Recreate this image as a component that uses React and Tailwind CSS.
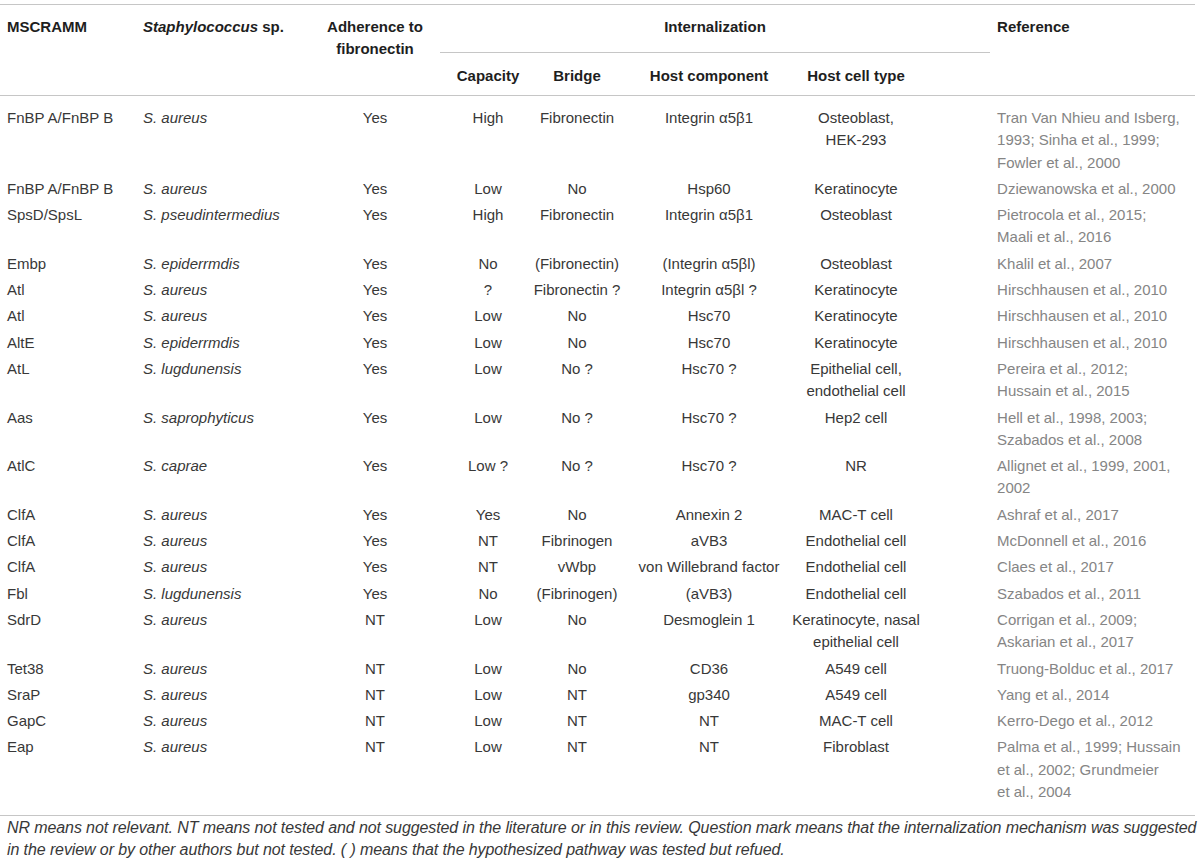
import React from 'react';

const rows = [
    { m: "FnBP A/FnBP B", sp: "S. aureus", adh: "Yes", cap: "High", bridge: "Fibronectin", host: "Integrin α5β1", cell: ["Osteoblast,", "HEK-293"], ref: ["Tran Van Nhieu and Isberg,", "1993; Sinha et al., 1999;", "Fowler et al., 2000"] },
    { m: "FnBP A/FnBP B", sp: "S. aureus", adh: "Yes", cap: "Low", bridge: "No", host: "Hsp60", cell: ["Keratinocyte"], ref: ["Dziewanowska et al., 2000"] },
    { m: "SpsD/SpsL", sp: "S. pseudintermedius", adh: "Yes", cap: "High", bridge: "Fibronectin", host: "Integrin α5β1", cell: ["Osteoblast"], ref: ["Pietrocola et al., 2015;", "Maali et al., 2016"] },
    { m: "Embp", sp: "S. epiderrmdis", adh: "Yes", cap: "No", bridge: "(Fibronectin)", host: "(Integrin α5βl)", cell: ["Osteoblast"], ref: ["Khalil et al., 2007"] },
    { m: "Atl", sp: "S. aureus", adh: "Yes", cap: "?", bridge: "Fibronectin ?", host: "Integrin α5βl ?", cell: ["Keratinocyte"], ref: ["Hirschhausen et al., 2010"] },
    { m: "Atl", sp: "S. aureus", adh: "Yes", cap: "Low", bridge: "No", host: "Hsc70", cell: ["Keratinocyte"], ref: ["Hirschhausen et al., 2010"] },
    { m: "AltE", sp: "S. epiderrmdis", adh: "Yes", cap: "Low", bridge: "No", host: "Hsc70", cell: ["Keratinocyte"], ref: ["Hirschhausen et al., 2010"] },
    { m: "AtL", sp: "S. lugdunensis", adh: "Yes", cap: "Low", bridge: "No ?", host: "Hsc70 ?", cell: ["Epithelial cell,", "endothelial cell"], ref: ["Pereira et al., 2012;", "Hussain et al., 2015"] },
    { m: "Aas", sp: "S. saprophyticus", adh: "Yes", cap: "Low", bridge: "No ?", host: "Hsc70 ?", cell: ["Hep2 cell"], ref: ["Hell et al., 1998, 2003;", "Szabados et al., 2008"] },
    { m: "AtlC", sp: "S. caprae", adh: "Yes", cap: "Low ?", bridge: "No ?", host: "Hsc70 ?", cell: ["NR"], ref: ["Allignet et al., 1999, 2001,", "2002"] },
    { m: "ClfA", sp: "S. aureus", adh: "Yes", cap: "Yes", bridge: "No", host: "Annexin 2", cell: ["MAC-T cell"], ref: ["Ashraf et al., 2017"] },
    { m: "ClfA", sp: "S. aureus", adh: "Yes", cap: "NT", bridge: "Fibrinogen", host: "aVB3", cell: ["Endothelial cell"], ref: ["McDonnell et al., 2016"] },
    { m: "ClfA", sp: "S. aureus", adh: "Yes", cap: "NT", bridge: "vWbp", host: "von Willebrand factor", cell: ["Endothelial cell"], ref: ["Claes et al., 2017"] },
    { m: "Fbl", sp: "S. lugdunensis", adh: "Yes", cap: "No", bridge: "(Fibrinogen)", host: "(aVB3)", cell: ["Endothelial cell"], ref: ["Szabados et al., 2011"] },
    { m: "SdrD", sp: "S. aureus", adh: "NT", cap: "Low", bridge: "No", host: "Desmoglein 1", cell: ["Keratinocyte, nasal", "epithelial cell"], ref: ["Corrigan et al., 2009;", "Askarian et al., 2017"] },
    { m: "Tet38", sp: "S. aureus", adh: "NT", cap: "Low", bridge: "No", host: "CD36", cell: ["A549 cell"], ref: ["Truong-Bolduc et al., 2017"] },
    { m: "SraP", sp: "S. aureus", adh: "NT", cap: "Low", bridge: "NT", host: "gp340", cell: ["A549 cell"], ref: ["Yang et al., 2014"] },
    { m: "GapC", sp: "S. aureus", adh: "NT", cap: "Low", bridge: "NT", host: "NT", cell: ["MAC-T cell"], ref: ["Kerro-Dego et al., 2012"] },
    { m: "Eap", sp: "S. aureus", adh: "NT", cap: "Low", bridge: "NT", host: "NT", cell: ["Fibroblast"], ref: ["Palma et al., 1999; Hussain", "et al., 2002; Grundmeier", "et al., 2004"] }
];

const Lines = ({ items }) => (
    <div className="flex flex-col items-center whitespace-nowrap">
        {items.map((t, i) => <span key={i}>{t}</span>)}
    </div>
);

const App = () => {
    return (
        <div className="w-[1200px] h-[868px] bg-white pt-[4px] font-['Liberation_Sans',Arial,sans-serif] text-[15px] leading-[22.3px] text-[#383838]">
            <table className="w-[1195px] table-fixed border-collapse">
                <colgroup>
                    <col className="w-[135px]" />
                    <col className="w-[175px]" />
                    <col className="w-[130px]" />
                    <col className="w-[96px]" />
                    <col className="w-[82px]" />
                    <col className="w-[182px]" />
                    <col className="w-[112px]" />
                    <col className="w-[78px]" />
                    <col className="w-[205px]" />
                </colgroup>
                <thead className="border-y border-[#c6c6c6] text-[#1e1e1e] font-bold leading-[22px]">
                    <tr>
                        <th rowSpan={2} className="pl-[7px] pt-[11px] text-left align-top font-bold">MSCRAMM</th>
                        <th rowSpan={2} className="pl-[8px] pt-[11px] text-left align-top font-bold">
                            <i>Staphylococcus</i> sp.
                        </th>
                        <th rowSpan={2} className="pt-[11px] text-center align-top font-bold">
                            Adherence to<br />fibronectin
                        </th>
                        <th colSpan={5} className="p-0 pt-[11px] align-top font-bold">
                            <div className="border-b border-[#c6c6c6] pb-[14px] text-center">Internalization</div>
                        </th>
                        <th rowSpan={2} className="pl-[7px] pt-[11px] text-left align-top font-bold">Reference</th>
                    </tr>
                    <tr>
                        <th className="pt-[12px] pb-[8px] text-center font-bold">Capacity</th>
                        <th className="pt-[12px] pb-[8px] text-center font-bold">Bridge</th>
                        <th className="pt-[12px] pb-[8px] text-center font-bold">Host component</th>
                        <th className="pt-[12px] pb-[8px] font-bold"><Lines items={["Host cell type"]} /></th>
                        <th></th>
                    </tr>
                </thead>
                <tbody className="border-b border-[#c6c6c6]">
                    {rows.map((r, i) => {
                        const pad = i === 0 ? "pt-[11px] pb-[2px]" : i === rows.length - 1 ? "pt-[2px] pb-[12px]" : "py-[2px]";
                        return (
                            <tr key={i} className="align-top">
                                <td className={`pl-[7px] ${pad}`}>{r.m}</td>
                                <td className={`pl-[8px] italic ${pad}`}>{r.sp}</td>
                                <td className={`text-center ${pad}`}>{r.adh}</td>
                                <td className={`text-center ${pad}`}>{r.cap}</td>
                                <td className={pad}><Lines items={[r.bridge]} /></td>
                                <td className={pad}><Lines items={[r.host]} /></td>
                                <td className={pad}><Lines items={r.cell} /></td>
                                <td className={pad}></td>
                                <td className={`pl-[7px] text-[#858585] whitespace-nowrap ${pad}`}>
                                    {r.ref.map((t, j) => <div key={j}>{t}</div>)}
                                </td>
                            </tr>
                        );
                    })}
                </tbody>
            </table>
            <p className="w-[1195px] pl-[7px] pt-[1px] italic text-[16px] leading-[22px] tracking-[-0.1px] text-[#383838] whitespace-nowrap">
                NR means not relevant. NT means not tested and not suggested in the literature or in this review. Question mark means that the internalization mechanism was suggested
                <br />
                in the review or by other authors but not tested. ( ) means that the hypothesized pathway was tested but refued.
            </p>
        </div>
    );
};

export default App;
